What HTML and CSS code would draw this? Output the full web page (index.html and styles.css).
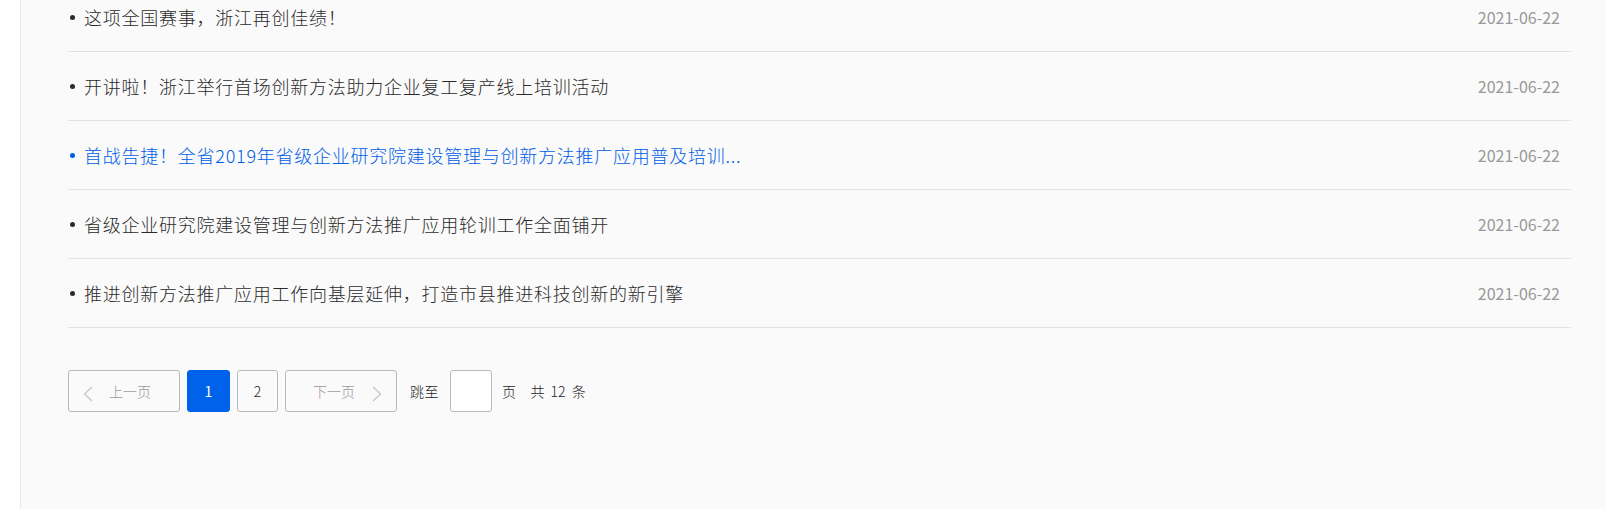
FILE: index.html
```html
<!DOCTYPE html>
<html lang="zh-CN">
<head>
    <meta charset="UTF-8">
    <meta name="viewport" content="width=device-width, initial-scale=1.0">
    <title>新闻列表</title>
    <link rel="stylesheet" href="styles.css">
</head>
<body>
    <div class="page">
        <aside class="side"></aside>
        <main class="main">
            <ul class="news-list">
                <li class="news-item">
                    <a class="news-title" href="#">这项全国赛事，浙江再创佳绩！</a>
                    <span class="news-date">2021-06-22</span>
                </li>
                <li class="news-item">
                    <a class="news-title" href="#">开讲啦！浙江举行首场创新方法助力企业复工复产线上培训活动</a>
                    <span class="news-date">2021-06-22</span>
                </li>
                <li class="news-item active">
                    <a class="news-title" href="#">首战告捷！全省2019年省级企业研究院建设管理与创新方法推广应用普及培训...</a>
                    <span class="news-date">2021-06-22</span>
                </li>
                <li class="news-item">
                    <a class="news-title" href="#">省级企业研究院建设管理与创新方法推广应用轮训工作全面铺开</a>
                    <span class="news-date">2021-06-22</span>
                </li>
                <li class="news-item">
                    <a class="news-title" href="#">推进创新方法推广应用工作向基层延伸，打造市县推进科技创新的新引擎</a>
                    <span class="news-date">2021-06-22</span>
                </li>
            </ul>

            <div class="pager">
                <button class="pager-btn pager-prev">
                    <svg class="chevron" width="10" height="16" viewBox="0 0 10 16"><polyline points="9,1 1.5,8 9,15"/></svg>
                    上一页
                </button>
                <button class="pager-btn pager-num active">1</button>
                <button class="pager-btn pager-num">2</button>
                <button class="pager-btn pager-next">
                    下一页
                    <svg class="chevron" width="10" height="16" viewBox="0 0 10 16"><polyline points="1,1 8.5,8 1,15"/></svg>
                </button>
                <span class="pager-label">跳至</span>
                <input class="pager-input" type="text">
                <span class="pager-label pager-unit">页</span>
                <span class="pager-total">共 12 条</span>
            </div>
        </main>
    </div>
</body>
</html>
```

FILE: styles.css
```css
body {
    margin: 0;
    font-family: "Noto Sans CJK SC", "Noto Sans", sans-serif;
    background-color: #fff;
    color: #333;
}
.page {
    display: flex;
    min-height: 100vh;
    overflow: hidden;
}
.side {
    width: 20px;
    background-color: #fff;
    border-right: 1px solid #ebebeb;
}
.main {
    flex: 1;
    background-color: #fafafa;
    padding: 0 35px 0 47px;
}
.news-list {
    list-style: none;
    margin: -17px 0 0;
    padding: 0;
}
.news-item {
    display: flex;
    align-items: center;
    height: 68px;
    padding: 0 11px 0 2px;
    border-bottom: 1px solid #e3e3e3;
    color: #2b2b2b;
}
.news-item::before {
    content: "";
    width: 5px;
    height: 5px;
    border-radius: 50%;
    background-color: currentColor;
    margin-right: 9px;
}
.news-title {
    flex: 1;
    font-size: 18px;
    line-height: 24px;
    letter-spacing: 0.75px;
    font-weight: 300;
    color: inherit;
    text-decoration: none;
    white-space: nowrap;
}
.news-item.active {
    color: #005de6;
}
.news-date {
    font-size: 16px;
    color: #999;
}
.pager {
    display: flex;
    align-items: center;
    margin-top: 42px;
    font-size: 14px;
    font-weight: 300;
    color: #222;
}
.pager-btn {
    box-sizing: border-box;
    height: 42px;
    margin: 0 7px 0 0;
    padding: 0;
    border: 1px solid #b9b9b9;
    border-radius: 3px;
    background-color: transparent;
    font-family: inherit;
    font-size: 14px;
    font-weight: 300;
    color: #222;
    cursor: pointer;
}
.pager-num {
    width: 41px;
}
.pager-num.active {
    width: 43px;
    background-color: #0062eb;
    border-color: #0062eb;
    color: #fff;
    font-weight: 400;
}
.pager-prev,
.pager-next {
    display: flex;
    align-items: center;
    width: 112px;
    color: #999;
}
.pager-prev {
    padding-left: 14px;
    gap: 16px;
}
.pager-next {
    padding-left: 27px;
    gap: 17px;
    margin-right: 13px;
}
.chevron {
    margin-top: 5px;
}
.chevron polyline {
    fill: none;
    stroke: #c8c8c8;
    stroke-width: 1.4;
}
.pager-label {
    letter-spacing: 0.5px;
}
.pager-input {
    box-sizing: border-box;
    width: 42px;
    height: 42px;
    margin: 0 10px 0 11px;
    border: 1px solid #b9b9b9;
    border-radius: 3px;
    background-color: #fff;
}
.pager-unit {
    margin-right: 14px;
}
.pager-total {
    word-spacing: 3px;
}
```
